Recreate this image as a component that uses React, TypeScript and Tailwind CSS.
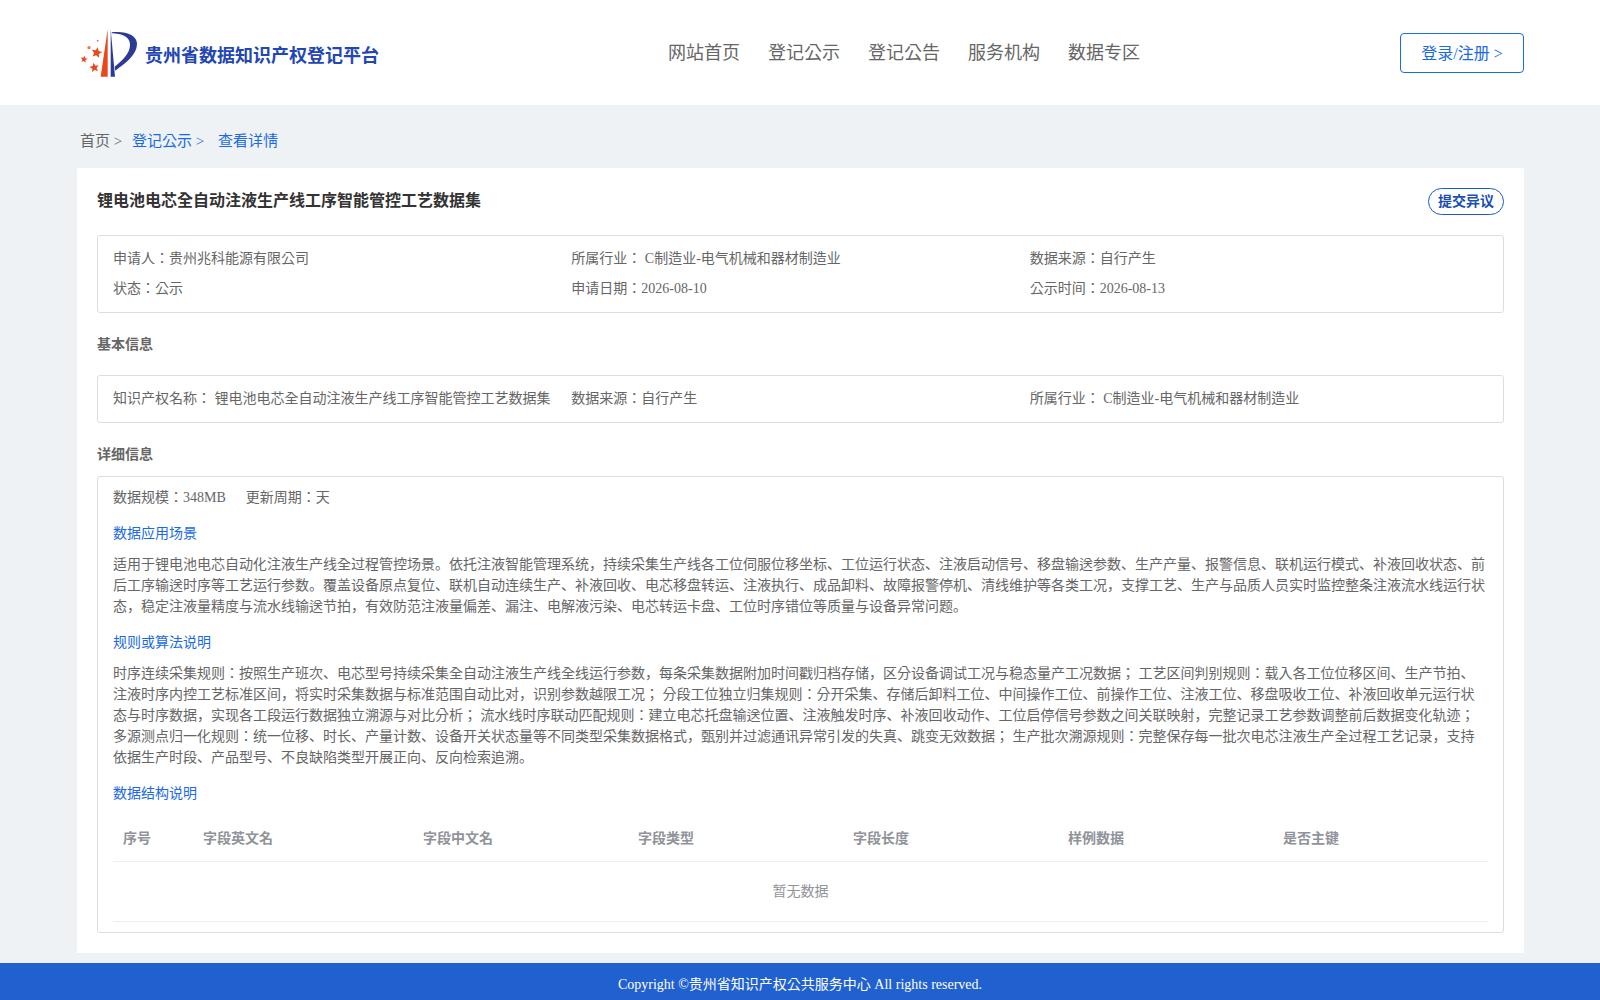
import React from 'react';

const infoRows = [
    ['申请人：贵州兆科能源有限公司', '所属行业： C制造业-电气机械和器材制造业', '数据来源：自行产生'],
    ['状态：公示', '申请日期：2026-08-10', '公示时间：2026-08-13'],
];

const columns = ['序号', '字段英文名', '字段中文名', '字段类型', '字段长度', '样例数据', '是否主键'];

// five pointed star for the logo
function Star({ x, y, r, rot = 0 }: { x: number; y: number; r: number; rot?: number }) {
    const pts = [];
    for (let i = 0; i < 10; i++) {
        const a = ((rot + i * 36 - 90) * Math.PI) / 180;
        const d = i % 2 === 0 ? r : r * 0.45;
        pts.push(`${(x + d * Math.cos(a)).toFixed(1)},${(y + d * Math.sin(a)).toFixed(1)}`);
    }
    return <polygon points={pts.join(' ')} fill="#e8481c" />;
}

function Logo() {
    return (
        <svg width="60" height="52" viewBox="30 24 180 156" className="shrink-0 mt-[3px]">
            <path d="M113 28 L113 170 L92 170 Z" fill="#e8481c" />
            <path d="M122 28 L135 170 L122 170 Z" fill="#2a3a96" />
            <path d="M125 37 C165 32 201 44 201 72 C201 105 165 130 136 152 L134 140 C158 120 180 100 180 74 C180 50 155 40 125 40 Z" fill="#2a3a96" />
            <Star x={80} y={98} r={17} rot={12} />
            <Star x={73} y={143} r={15} rot={-10} />
            <Star x={42} y={118} r={11} rot={10} />
            <circle cx="57" cy="83" r="5" fill="#ef7a50" />
            <circle cx="83" cy="62" r="3" fill="#ef7a50" />
        </svg>
    );
}

export default function App() {
    return (
        <div className="min-h-screen flex flex-col bg-[#eff2f5] font-['Liberation_Serif','Noto_Sans_CJK_KR',serif] text-sm text-[#666666]">
            {/* HEADER */}
            <header className="h-[105px] bg-white pl-[80px] pr-[76px] flex items-center">
                <div className="flex items-center w-[588px] gap-[5px]">
                    <Logo />
                    <span className="text-lg font-bold text-[#2346b5] mt-[6px]">贵州省数据知识产权登记平台</span>
                </div>
                <nav className="flex gap-7 text-lg text-[#666666]">
                    <span>网站首页</span>
                    <span>登记公示</span>
                    <span>登记公告</span>
                    <span>服务机构</span>
                    <span>数据专区</span>
                </nav>
                <button className="ml-auto w-[124px] h-[40px] border border-[#1a6ae6] rounded text-base text-[#1a6ae6] pt-[2px]">登录/注册 &gt;</button>
            </header>

            {/* BREADCRUMB */}
            <div className="h-[63px] px-[80px] pt-[25px] text-[15px] leading-[22px] flex">
                <span className="w-[52px]">首页 &gt;</span>
                <span className="w-[86px] text-[#1a6ae6]">登记公示 &gt;</span>
                <span className="text-[#1a6ae6]">查看详情</span>
            </div>

            {/* CARD */}
            <main className="ml-[77px] mr-[76px] bg-white p-5">
                <div className="flex justify-between h-[47px]">
                    <h1 className="text-base font-bold text-[#333333] leading-6 pt-[1px]">锂电池电芯全自动注液生产线工序智能管控工艺数据集</h1>
                    <button className="w-[76px] h-[27px] border border-[#1a5cc8] rounded-[14px] text-sm font-bold text-[#1a4fb0]">提交异议</button>
                </div>

                <div className="border border-[#dddddd] rounded-[3px] px-[15px] py-[8px] h-[78px]">
                    {infoRows.map((row) => (
                        <div key={row[0]} className="grid grid-cols-3 h-[30px] items-center">
                            {row.map((c) => <div key={c}>{c}</div>)}
                        </div>
                    ))}
                </div>

                <h2 className="text-sm font-bold leading-[20px] mt-[22px] mb-[20px]">基本信息</h2>

                <div className="border border-[#dddddd] rounded-[3px] px-[15px] h-[48px] grid grid-cols-3 items-center">
                    <div>知识产权名称： 锂电池电芯全自动注液生产线工序智能管控工艺数据集</div>
                    <div>数据来源：自行产生</div>
                    <div>所属行业： C制造业-电气机械和器材制造业</div>
                </div>

                <h2 className="text-sm font-bold leading-[20px] mt-[22px] mb-[11px]">详细信息</h2>

                <div className="border border-[#dddddd] rounded-[3px] px-[15px] pt-[10px] pb-[10px]">
                    <div className="flex gap-5 leading-[21px]">
                        <span>数据规模：348MB</span>
                        <span>更新周期：天</span>
                    </div>

                    <div className="text-[#1a6ae6] leading-[21px] mt-[15px]">数据应用场景</div>
                    <p className="leading-[21px] mt-[10px]">适用于锂电池电芯自动化注液生产线全过程管控场景。依托注液智能管理系统，持续采集生产线各工位伺服位移坐标、工位运行状态、注液启动信号、移盘输送参数、生产产量、报警信息、联机运行模式、补液回收状态、前后工序输送时序等工艺运行参数。覆盖设备原点复位、联机自动连续生产、补液回收、电芯移盘转运、注液执行、成品卸料、故障报警停机、清线维护等各类工况，支撑工艺、生产与品质人员实时监控整条注液流水线运行状态，稳定注液量精度与流水线输送节拍，有效防范注液量偏差、漏注、电解液污染、电芯转运卡盘、工位时序错位等质量与设备异常问题。</p>

                    <div className="text-[#1a6ae6] leading-[21px] mt-[15px]">规则或算法说明</div>
                    <p className="leading-[21px] mt-[10px]">时序连续采集规则：按照生产班次、电芯型号持续采集全自动注液生产线全线运行参数，每条采集数据附加时间戳归档存储，区分设备调试工况与稳态量产工况数据； 工艺区间判别规则：载入各工位位移区间、生产节拍、注液时序内控工艺标准区间，将实时采集数据与标准范围自动比对，识别参数越限工况； 分段工位独立归集规则：分开采集、存储后卸料工位、中间操作工位、前操作工位、注液工位、移盘吸收工位、补液回收单元运行状态与时序数据，实现各工段运行数据独立溯源与对比分析； 流水线时序联动匹配规则：建立电芯托盘输送位置、注液触发时序、补液回收动作、工位启停信号参数之间关联映射，完整记录工艺参数调整前后数据变化轨迹； 多源测点归一化规则：统一位移、时长、产量计数、设备开关状态量等不同类型采集数据格式，甄别并过滤通讯异常引发的失真、跳变无效数据； 生产批次溯源规则：完整保存每一批次电芯注液生产全过程工艺记录，支持依据生产时段、产品型号、不良缺陷类型开展正向、反向检索追溯。</p>

                    <div className="text-[#1a6ae6] leading-[21px] mt-[15px]">数据结构说明</div>

                    <div className="grid grid-cols-[80px_220px_215px_215px_215px_215px_1fr] h-[53px] mt-[5px] pt-[8px] items-center border-b border-[#ebeef5] font-bold text-[#909399] pl-[10px]">
                        {columns.map((c) => <div key={c}>{c}</div>)}
                    </div>
                    <div className="h-[60px] flex items-center justify-center text-[#909399] border-b border-[#ebeef5]">暂无数据</div>
                </div>
            </main>

            {/* FOOTER */}
            <footer className="mt-[10px] h-[37px] pt-[6px] bg-[#2060cf] text-white flex items-center justify-center">
                Copyright ©贵州省知识产权公共服务中心 All rights reserved.
            </footer>
        </div>
    );
}
